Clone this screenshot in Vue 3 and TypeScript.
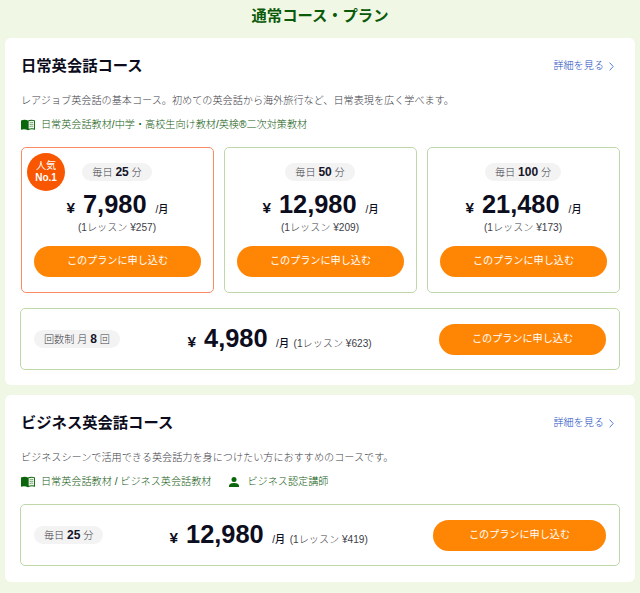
<script setup lang="ts">
interface Plan {
  unit: string
  count: string
  suffix: string
  price: string
  lesson: string
  popular?: boolean
}
interface Feature {
  icon: 'book' | 'person'
  text: string
}
interface Course {
  id: string
  title: string
  description: string
  features: Feature[]
  cards: Plan[]
  row: Plan
}

const courses: Course[] = [
  {
    id: 'daily',
    title: '日常英会話コース',
    description: 'レアジョブ英会話の基本コース。初めての英会話から海外旅行など、日常表現を広く学べます。',
    features: [{ icon: 'book', text: '日常英会話教材/中学・高校生向け教材/英検®二次対策教材' }],
    cards: [
      { unit: '毎日', count: '25', suffix: '分', price: '7,980', lesson: '257', popular: true },
      { unit: '毎日', count: '50', suffix: '分', price: '12,980', lesson: '209' },
      { unit: '毎日', count: '100', suffix: '分', price: '21,480', lesson: '173' },
    ],
    row: { unit: '回数制 月', count: '8', suffix: '回', price: '4,980', lesson: '623' },
  },
  {
    id: 'business',
    title: 'ビジネス英会話コース',
    description: 'ビジネスシーンで活用できる英会話力を身につけたい方におすすめのコースです。',
    features: [
      { icon: 'book', text: '日常英会話教材 / ビジネス英会話教材' },
      { icon: 'person', text: 'ビジネス認定講師' },
    ],
    cards: [],
    row: { unit: '毎日', count: '25', suffix: '分', price: '12,980', lesson: '419' },
  },
]
</script>

<template>
  <main class="page">
    <h1 class="page-title">通常コース・プラン</h1>
    <section v-for="course in courses" :key="course.id" class="course" :class="course.id">
      <header class="course-head">
        <h2>{{ course.title }}</h2>
        <a class="detail">詳細を見る
          <svg class="chevron" viewBox="0 0 5 9"><path d="M.6.6 4.2 4.5.6 8.4" /></svg>
        </a>
      </header>
      <p class="description">{{ course.description }}</p>
      <div class="features">
        <span v-for="f in course.features" :key="f.text" class="feature">
          <svg v-if="f.icon === 'book'" class="book" viewBox="0 0 15 12">
            <path class="solid" d="M0 1.2Q4-.4 7.5 1.2 11-.4 15 1.2V11Q11 9.7 7.5 11.6 4 9.7 0 11Z" />
            <path class="paper" d="M8.2 1.9Q11 .8 14 1.8V9.7Q11 8.9 8.2 10.1Z" />
            <path class="lines" d="M9.2 3.7Q11 3 13.1 3.4M9.2 5.7Q11 5 13.1 5.4M9.2 7.7Q11 7 13.1 7.4" />
          </svg>
          <svg v-else class="person" viewBox="0 0 10 10">
            <circle cx="5" cy="2.5" r="2.5" />
            <path d="M0 10V8.6C0 6.9 3.3 6.1 5 6.1S10 6.9 10 8.6V10Z" />
          </svg>
          <span>{{ f.text }}</span>
        </span>
      </div>

      <div v-if="course.cards.length" class="cards">
        <article v-for="p in course.cards" :key="p.count" class="card" :class="{ popular: p.popular }">
          <div v-if="p.popular" class="badge"><span>人気</span><b>No.1</b></div>
          <div class="pill">{{ p.unit }} <b>{{ p.count }}</b> {{ p.suffix }}</div>
          <div class="price">
            <span class="yen">¥</span><span class="amount">{{ p.price }}</span><span class="per">/月</span>
          </div>
          <div class="lesson">(1レッスン ¥{{ p.lesson }})</div>
          <button class="apply" type="button">このプランに申し込む</button>
        </article>
      </div>

      <article class="row">
        <div class="row-unit"><div class="pill">{{ course.row.unit }} <b>{{ course.row.count }}</b> {{ course.row.suffix }}</div></div>
        <div class="row-price">
          <div class="price">
            <span class="yen">¥</span><span class="amount">{{ course.row.price }}</span><span class="per">/月</span>
          </div>
          <div class="lesson">(1レッスン ¥{{ course.row.lesson }})</div>
        </div>
        <button class="apply" type="button">このプランに申し込む</button>
      </article>
    </section>
  </main>
</template>

<style>
body {
  background: #f0f7e4;
}
</style>

<style scoped>
.page {
  box-sizing: border-box;
  height: 593px;
  padding: 0 5px;
  background: #f0f7e4;
  color: #404048;
  font: 300 10.15px/16px "Liberation Sans", "Noto Sans CJK JP", sans-serif;
  overflow: hidden;
  white-space: nowrap;
}
.page * {
  box-sizing: border-box;
}
.page-title {
  height: 38px;
  margin: 0;
  padding-top: 4px;
  color: #0a5a0a;
  font-size: 15.3px;
  font-weight: 700;
  line-height: 24px;
  text-align: center;
}
.course {
  height: 347px;
  margin-bottom: 10px;
  padding: 16px 15px 0;
  background: #fff;
  border-radius: 6px;
}
.course.business {
  height: 187px;
}
.course-head {
  display: flex;
  align-items: center;
  justify-content: space-between;
  height: 24px;
  padding: 0 6px 0 1px;
}
h2 {
  margin: 0;
  color: #0c0c1c;
  font-size: 15.3px;
  font-weight: 700;
  line-height: 24px;
}
.detail {
  display: flex;
  align-items: center;
  gap: 5px;
  color: #2450c0;
}
.chevron {
  width: 5px;
  height: 9px;
  fill: none;
  stroke: #4470cf;
  stroke-width: 0.9;
}
.description {
  height: 16px;
  margin: 15px 0 0 1px;
}
.features {
  display: flex;
  gap: 18px;
  height: 16px;
  margin: 8px 0 0 1px;
  color: #145c12;
}
.feature {
  display: flex;
  align-items: center;
}
.book {
  width: 14px;
  height: 12px;
  margin: 0 6px 1px 0;
}
.solid {
  fill: #0b650b;
}
.paper {
  fill: #eef5ec;
}
.lines {
  fill: none;
  stroke: #4e8d4b;
  stroke-width: 0.8;
}
.person {
  width: 10px;
  height: 10px;
  margin: 0 8px 1px 0;
  fill: #0b650b;
}
.cards {
  display: grid;
  grid-template-columns: repeat(3, 1fr);
  gap: 10px;
  height: 146px;
  margin: 14px 0 0 1px;
}
.card {
  position: relative;
  display: flex;
  flex-direction: column;
  align-items: center;
  padding-top: 15px;
  border: 1px solid #bfd8a9;
  border-radius: 5px;
}
.popular {
  border-color: #fb8b63;
}
.badge {
  position: absolute;
  top: 5px;
  left: 5px;
  display: flex;
  flex-direction: column;
  align-items: center;
  justify-content: center;
  width: 38px;
  height: 38px;
  border-radius: 50%;
  background: #f95600;
  color: #fff;
  font-weight: 400;
  line-height: 12px;
}
.badge b {
  font-size: 10px;
  font-weight: 700;
}
.pill {
  height: 18px;
  padding: 0 10px;
  border-radius: 9px;
  background: #f3f3f3;
  line-height: 18px;
}
.card .pill {
  margin-right: 1px;
}
.pill b {
  color: #15152a;
  font-size: 12px;
  font-weight: 700;
}
.price {
  display: flex;
  align-items: baseline;
  height: 32px;
  margin-top: 7px;
  color: #0d0d20;
  font-weight: 700;
  line-height: 32px;
}
.yen {
  margin-right: 8px;
  font-size: 15.3px;
}
.amount {
  margin-right: 9px;
  font-size: 25.4px;
}
.per {
  font-size: 10.15px;
  font-weight: 500;
}
.lesson {
  line-height: 16px;
}
.card .lesson {
  margin-right: 1px;
}
.apply {
  width: 167px;
  height: 31px;
  padding: 0 0 2px;
  border: 0;
  border-radius: 16px;
  background: #ff8605;
  color: #fff;
  font: 400 10.15px/29px "Liberation Sans", "Noto Sans CJK JP", sans-serif;
}
.card .apply {
  margin-top: 10px;
}
.row {
  display: flex;
  align-items: center;
  height: 62px;
  margin-top: 15px;
  padding: 0 13px;
  border: 1px solid #bfd8a9;
  border-radius: 5px;
}
.row-unit {
  width: 153.5px;
}
.row-unit .pill {
  width: fit-content;
}
.row-price {
  display: flex;
  align-items: baseline;
  flex: 1;
  padding-bottom: 2px;
}
.row .price {
  margin-top: 0;
}
.row .amount {
  margin-right: 8.5px;
}
.row .lesson {
  margin-left: 4.5px;
}
.business .row {
  margin-top: 14px;
}
.business .row-unit {
  width: 135.5px;
}
.business .row .apply {
  width: 173px;
}
</style>
